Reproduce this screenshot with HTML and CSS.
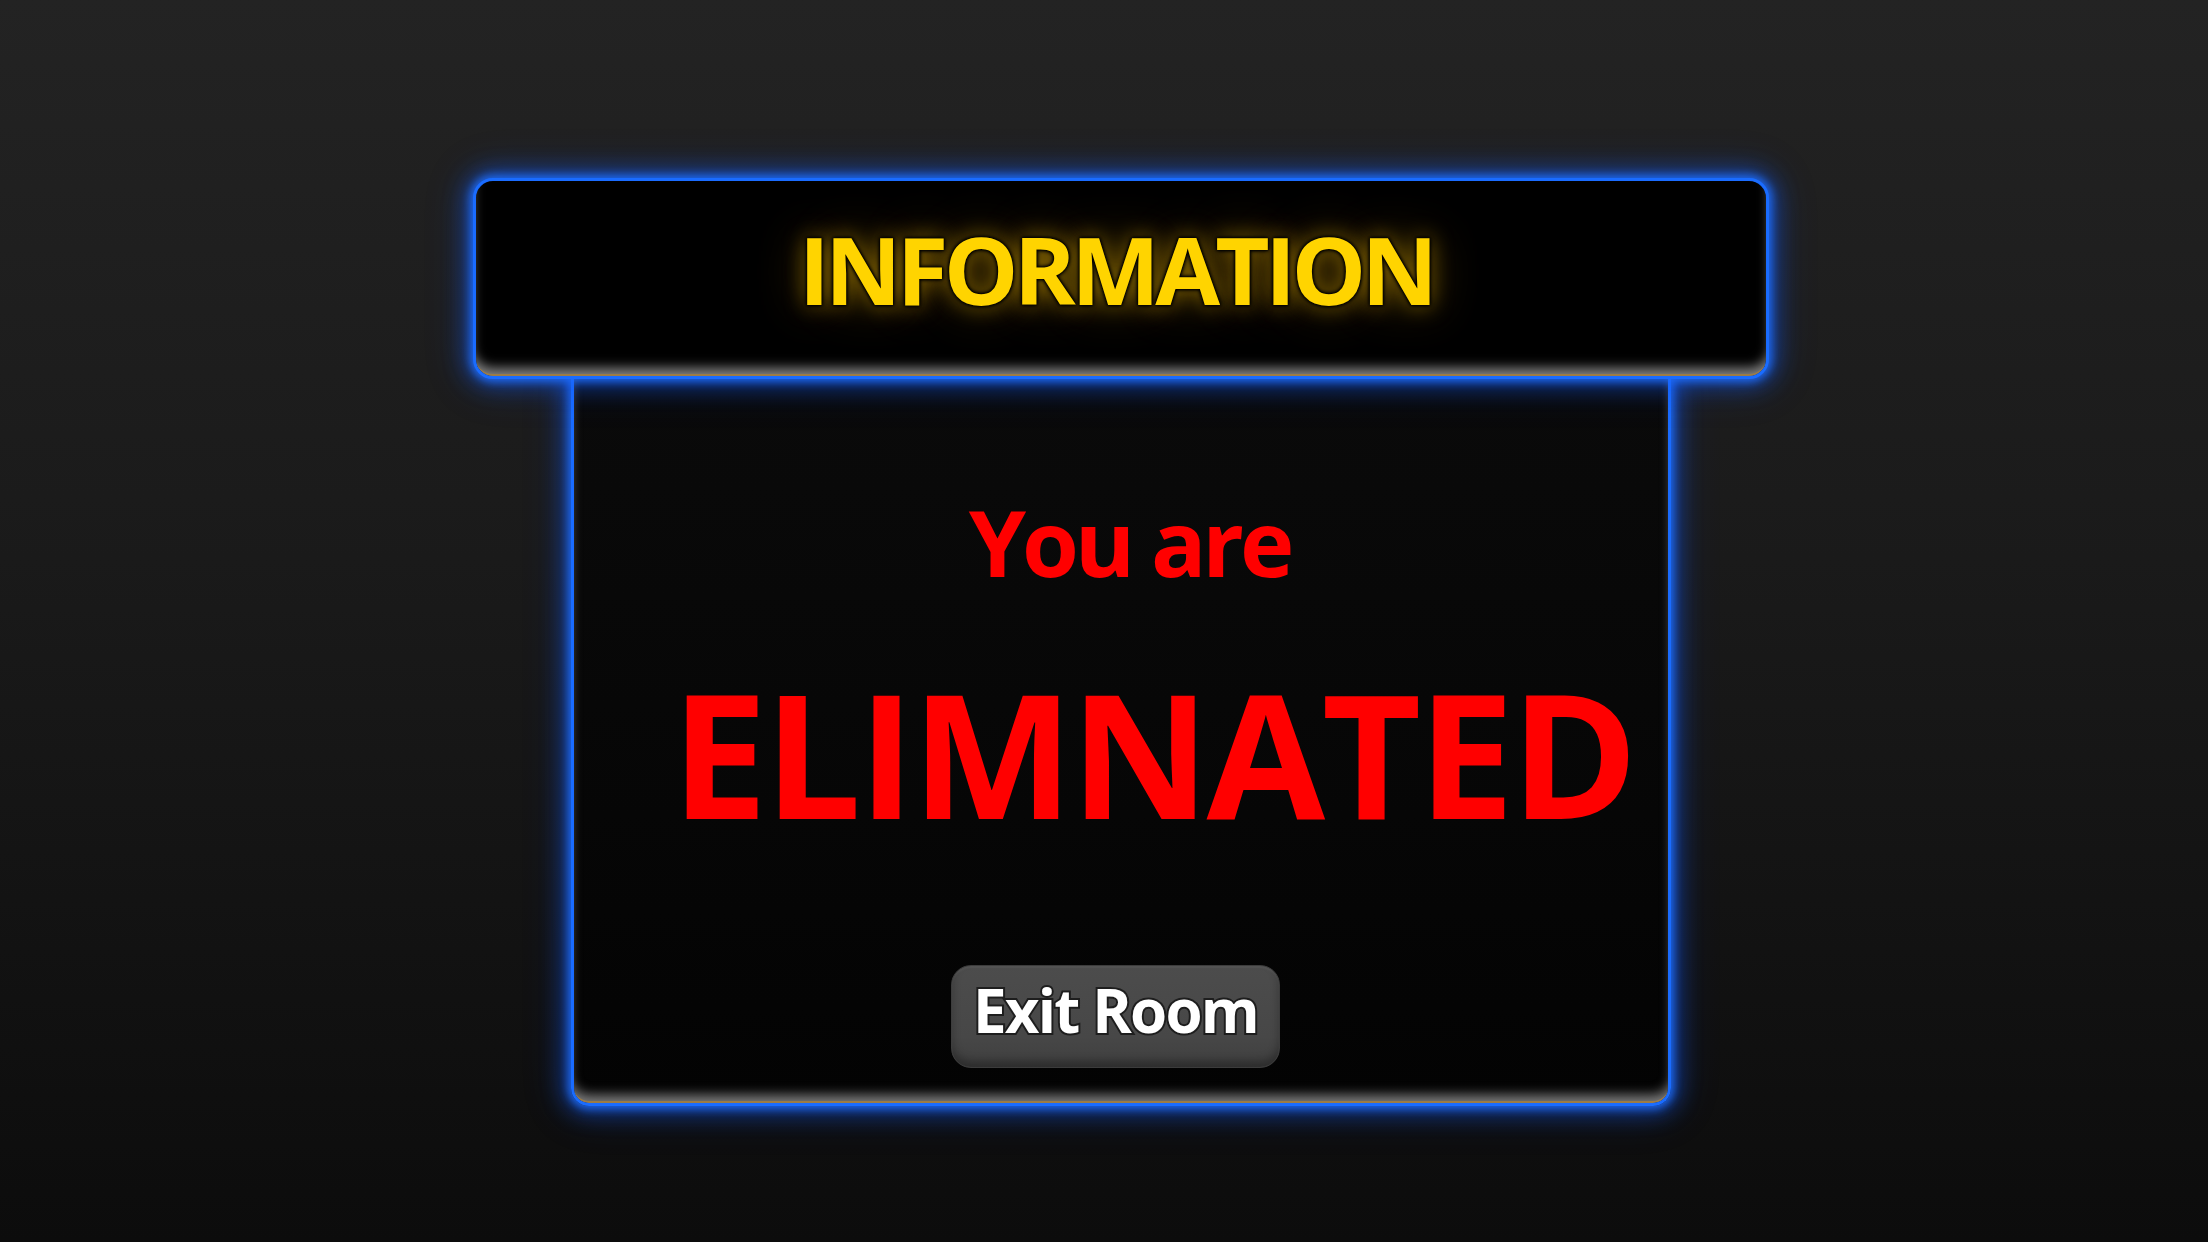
FILE: index.html
```html
<!DOCTYPE html>
<html lang="en">
<head>
<meta charset="utf-8">
<title>Information</title>
<link rel="stylesheet" href="styles.css">
</head>
<body>
<main class="stage">
  <div class="dialog">
    <header class="dialog-header">
      <h1 class="dialog-title">INFORMATION</h1>
    </header>
    <section class="dialog-body">
      <p class="msg-small">You are</p>
      <p class="msg-big">ELIMNATED</p>
      <button class="exit-btn" type="button">Exit Room</button>
    </section>
  </div>
</main>
</body>
</html>
```
FILE: styles.css
```css
html, body {
  margin: 0;
  padding: 0;
}
body {
  width: 2208px;
  height: 1242px;
  overflow: hidden;
  background: linear-gradient(180deg, #232323 0%, #1a1a1a 45%, #0c0c0c 100%);
  font-family: "Open Sans", "Liberation Sans", sans-serif;
}
.stage {
  display: flex;
  justify-content: center;
  padding-top: 178px;
}
.dialog {
  display: flex;
  flex-direction: column;
  align-items: center;
  width: 1296px;
  margin-left: 34px;
}
.dialog-header {
  position: relative;
  z-index: 2;
  box-sizing: border-box;
  width: 1296px;
  height: 201px;
  padding-top: 41px;
  padding-right: 10px;
  border: 3px solid #1a6cff;
  border-radius: 20px;
  background: #000;
  box-shadow:
    0 0 8px 3px rgba(30, 110, 255, 0.85),
    0 0 22px 8px rgba(20, 95, 255, 0.45),
    0 0 40px 10px rgba(20, 80, 230, 0.18),
    inset 0 -3px 0 -1px #9c7b45,
    inset 0 -12px 12px -4px rgba(175, 175, 175, 0.75);
  display: flex;
  justify-content: center;
}
.dialog-title {
  margin: 0;
  font-family: "Open Sans", "Liberation Sans", sans-serif;
  font-weight: 700;
  font-size: 94px;
  line-height: 1;
  letter-spacing: -0.05em;
  color: #ffd400;
  -webkit-text-stroke: 7px #000;
  paint-order: stroke fill;
  text-shadow:
    0 0 2px #000,
    0 0 3px #000,
    0 0 4px #000,
    0 0 5px #000,
    0 0 22px rgba(255, 200, 0, 0.5),
    0 0 48px rgba(255, 180, 0, 0.3);
}
.dialog-body {
  position: relative;
  z-index: 1;
  box-sizing: border-box;
  width: 1100px;
  height: 727px;
  padding-top: 117px;
  border: 3px solid #1a6cff;
  border-top: 0;
  border-radius: 0 0 18px 18px;
  background: linear-gradient(180deg, #0a0a0a 0%, #060606 60%, #030303 100%);
  box-shadow:
    0 0 8px 3px rgba(30, 110, 255, 0.85),
    0 0 22px 8px rgba(20, 95, 255, 0.45),
    0 0 40px 10px rgba(20, 80, 230, 0.18),
    inset 0 -3px 0 -1px #9c7b45,
    inset 0 -12px 12px -4px rgba(175, 175, 175, 0.7);
  display: flex;
  flex-direction: column;
  align-items: center;
}
.msg-small {
  margin: 0 0 0 17px;
  font-weight: 700;
  font-size: 92px;
  line-height: 1;
  letter-spacing: -0.045em;
  color: #ff0000;
}
.msg-big {
  margin: 78px 0 0 64px;
  font-weight: 700;
  font-size: 172px;
  line-height: 1;
  letter-spacing: -0.02em;
  color: #ff0000;
}
.exit-btn {
  margin: 127px 0 0 -11px;
  box-sizing: border-box;
  width: 329px;
  height: 103px;
  padding: 14px 0 0;
  border: 1px solid #3c3c3c;
  border-radius: 20px;
  background: linear-gradient(180deg, #4c4c4c 0%, #474747 70%, #3f3f3f 100%);
  box-shadow:
    inset 0 -6px 8px rgba(0, 0, 0, 0.3),
    inset 0 2px 2px rgba(255, 255, 255, 0.06);
  font-family: "Open Sans", "Liberation Sans", sans-serif;
  font-weight: 700;
  font-size: 60px;
  line-height: 1;
  letter-spacing: -0.03em;
  color: #fff;
  -webkit-text-stroke: 4px #1e1e1e;
  paint-order: stroke fill;
  display: flex;
  justify-content: center;
  align-items: flex-start;
  cursor: pointer;
}
```
